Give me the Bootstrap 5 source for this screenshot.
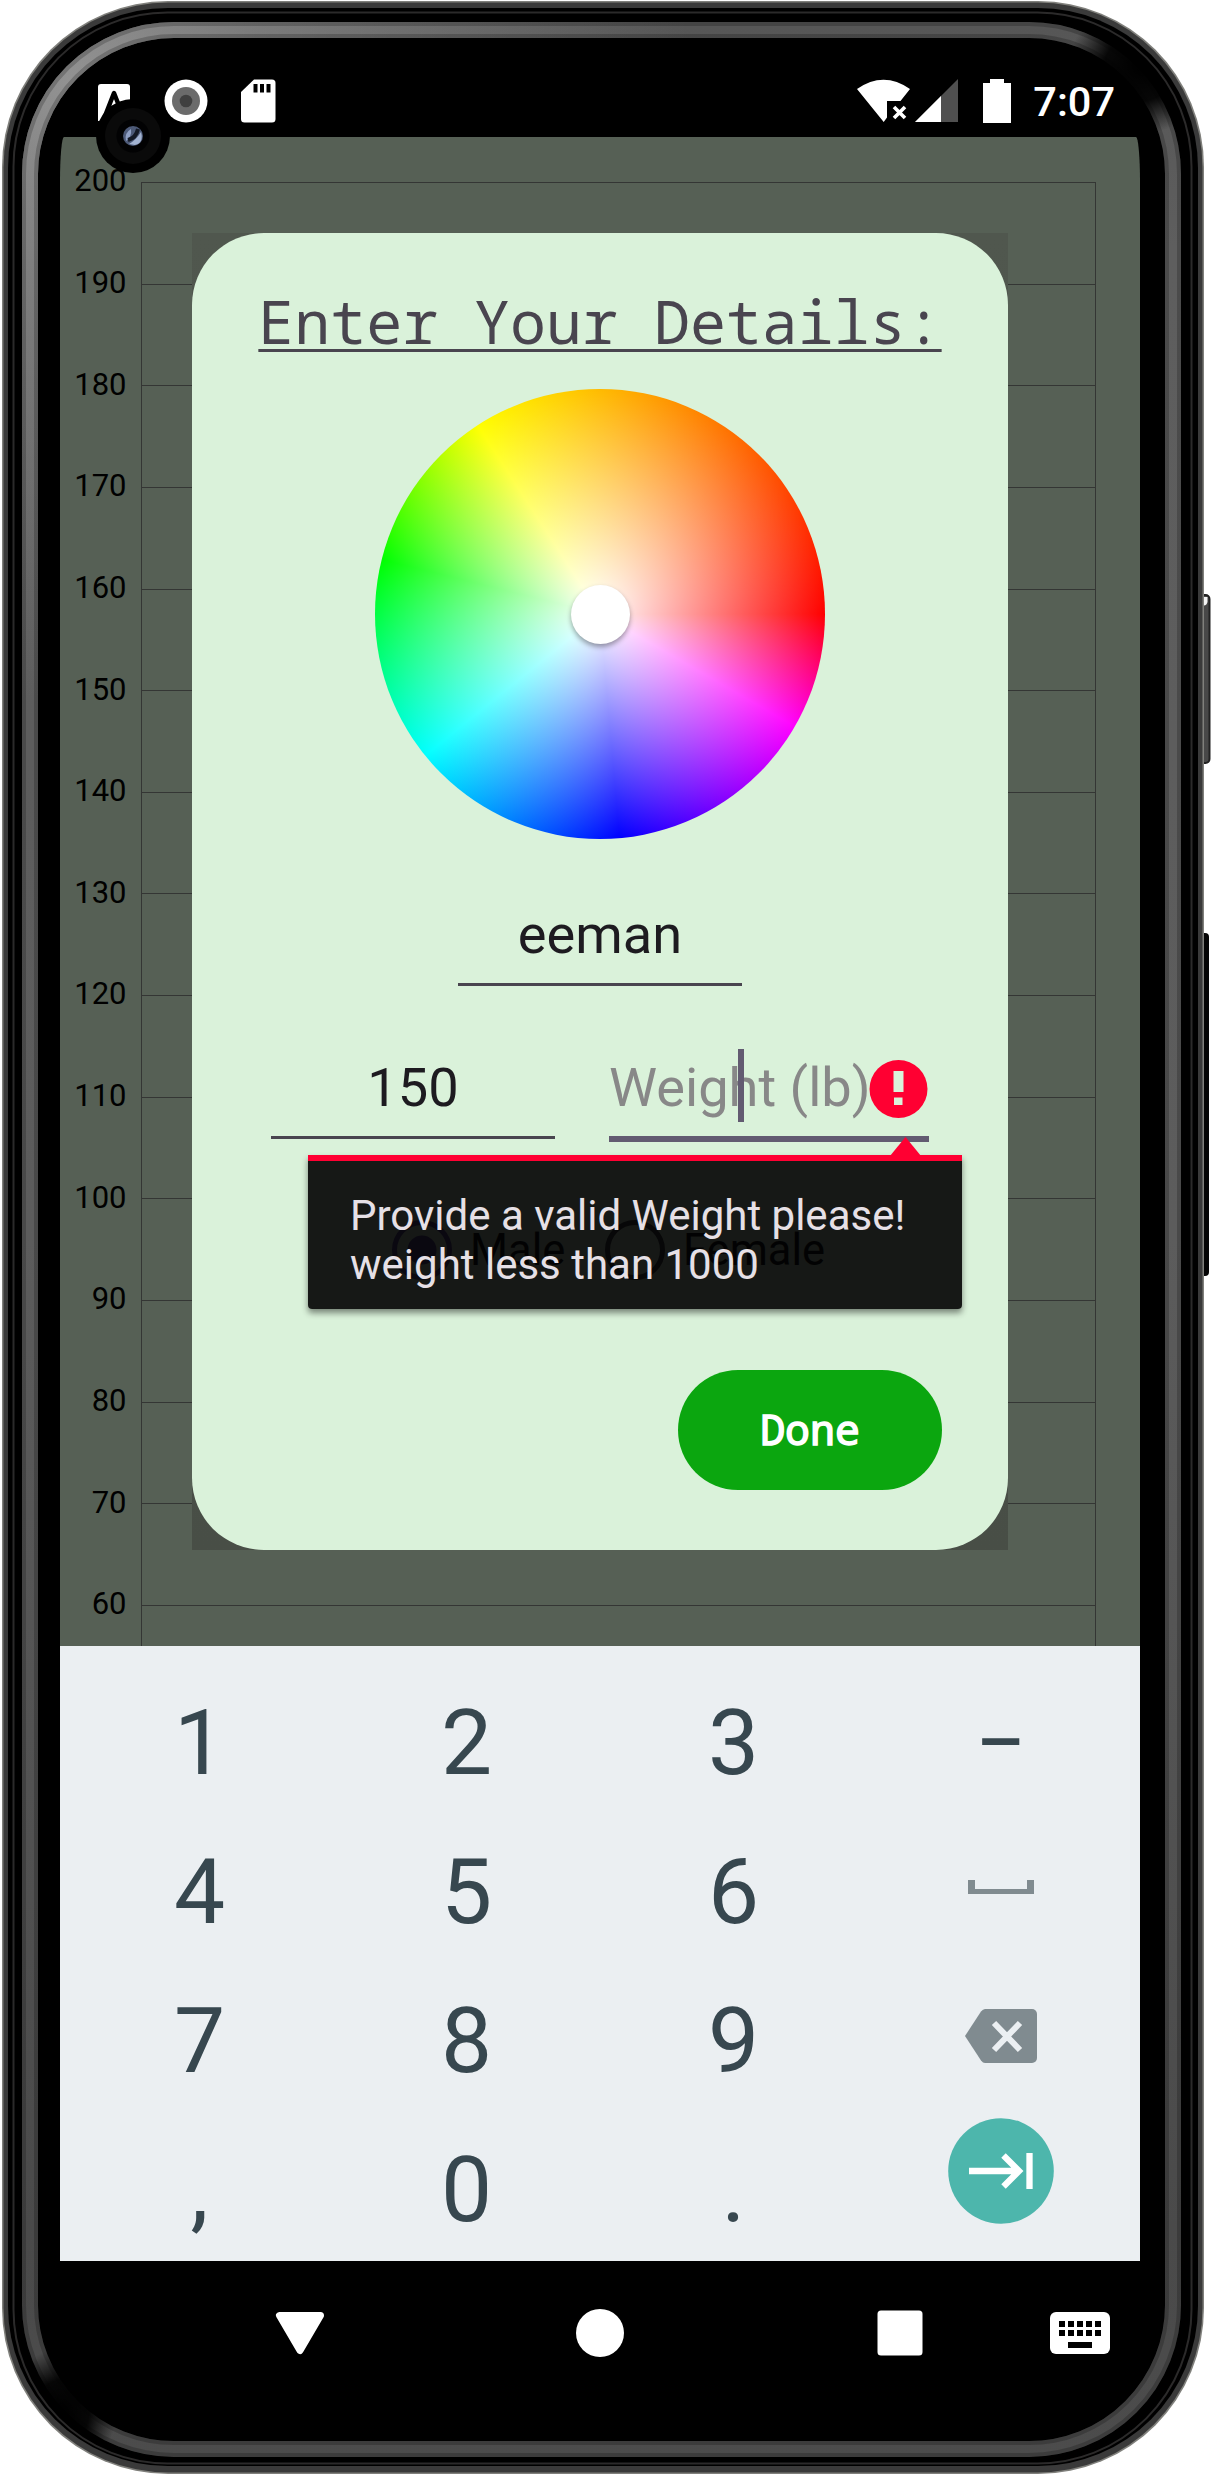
<!DOCTYPE html>
<html lang="en">
<head>
<meta charset="utf-8">
<meta name="viewport" content="width=device-width, initial-scale=1">
<title>Enter Your Details</title>
<link href="https://cdn.jsdelivr.net/npm/bootstrap@5.3.0/dist/css/bootstrap.min.css" rel="stylesheet">
<style>
  body { background:#fff; font-family:Roboto,"Liberation Sans",sans-serif; }
  svg { display:block; }
  .phone { width:1211px; height:2474px; padding:0 71px 0 60px; overflow:hidden; }
  .frame-art { left:0; top:0; }
  .statusbar { height:137px; }
  .status-left { padding:79px 0 0 37px; }
  .status-right { padding:79px 25px 0 0; }
  .clock { font-size:41.500px; font-weight:500; line-height:46px; color:#fff; margin-left:21px; }
  .camera { left:96px; top:99px; }
  .app-area { height:1509px; background:#566055; border-radius:4px 4px 0 0 / 44px 44px 0 0; overflow:hidden; }
  .chart { padding-top:45px; }
  .chart-row { height:101.64px; }
  .chart-label { width:66.5px; font-size:31px; line-height:40px; margin-top:-20.6px; color:#000; }
  .chart-cell { width:955px; margin-left:14.5px; border:1px solid #343634; border-bottom:0; }
  .dialog-box { left:132px; top:96px; width:816px; height:1317px; background:linear-gradient(#50574e,#484e46); }
  .dialog-card { border-radius:72px; background:#daf2da; }
  .dialog-title { font-family:"Noto Sans Mono","DejaVu Sans Mono",monospace; font-size:59.950px; line-height:60px; margin:58px 0 0; color:#49454f; text-decoration:underline; text-decoration-thickness:3px; text-underline-offset:5px; text-decoration-skip-ink:none; font-weight:400; white-space:nowrap; }
  .wheel { width:450px; height:450px; margin-top:38px; background:radial-gradient(closest-side,#fff,rgba(255,255,255,0)),conic-gradient(from 90deg,#f00 0deg,#f0f 30deg,#00f 85deg,#0ff 141deg,#0f0 194deg,#ff0 237deg,#f00 360deg); }
  .thumb { width:59px; height:59px; background:#fff; box-shadow:0 3px 5px rgba(0,0,0,.35); }
  .field { width:284px; padding-bottom:16px; border-bottom:3px solid #49454f; font-size:54.200px; line-height:64px; color:#1d1b20; text-align:center; }
  .field-name { margin-top:64px; }
  .field-row { margin-top:70px; padding-left:79px; gap:54px; }
  .field-active { width:320px; border-bottom:6px solid #625b71; color:#888; }
  .field-active .hint { width:260px; white-space:nowrap; }
  .caret { left:129px; top:-7px; width:6px; height:73px; background:#625b71; }
  .radio-row { margin-top:77px; padding-left:200px; height:62px; font-size:43.500px; line-height:64px; color:#1d1b20; }
  .radio-male { margin-left:18px; width:92px; white-space:nowrap; }
  .radio-dot-2 { margin-left:43px; }
  .radio-female { margin-left:18px; }
  .btn-done { width:264px; height:120px; margin:89px 66px 0 0; padding:0 0 3px; background:#0ba60f; color:#fff; border:0; border-radius:60px; font-family:"Noto Sans Mono","DejaVu Sans Mono",monospace; font-size:41.500px; line-height:60px; -webkit-text-stroke:1.5px #fff; }
  .err-pop { left:116px; top:922px; width:654px; height:154px; border-top:6px solid #ff0032; background:rgba(0,0,0,.9); background-clip:padding-box; border-radius:0 0 4px 4px; box-shadow:0 4px 6px rgba(0,0,0,.45); padding:30px 0 0 42px; color:#e6e0e6; font-size:42px; line-height:49px; white-space:nowrap; }
  .err-arrow { left:582px; top:-24px; }
  .keyboard { height:615px; background:#ebeff2; padding:23px 6px 0; }
  .key { height:149px; font-size:91px; line-height:148px; color:#37474f; text-align:center; }
  .navbar-keys { height:213px; }
</style>
</head>
<body>
<div class="phone position-relative">
  <svg class="frame-art position-absolute" width="1211" height="2474" viewBox="0 0 1211 2474">
    <defs>
      <linearGradient id="band" gradientUnits="userSpaceOnUse" x1="0" y1="0" x2="0" y2="2474">
        <stop offset="0" stop-color="#555"/><stop offset=".1" stop-color="#5e5e5e"/><stop offset=".5" stop-color="#5c5c5c"/><stop offset=".9" stop-color="#4a4a4a"/><stop offset="1" stop-color="#4c4c4c"/>
      </linearGradient>
      <radialGradient id="shine" gradientUnits="userSpaceOnUse" cx="70" cy="80" r="620">
        <stop offset="0" stop-color="#a0a0a0" stop-opacity=".8"/><stop offset=".3" stop-color="#a0a0a0" stop-opacity=".5"/><stop offset="1" stop-color="#a0a0a0" stop-opacity="0"/>
      </radialGradient>
      <radialGradient id="fade"><stop offset="0" stop-color="#000"/><stop offset=".5" stop-color="#000" stop-opacity=".92"/><stop offset="1" stop-color="#000" stop-opacity="0"/></radialGradient>
      <clipPath id="inner"><rect x="18" y="18" width="1167" height="2443" rx="150"/></clipPath>
    </defs>
    <rect x="1200" y="595" width="9.500" height="168" rx="4" fill="#484848" stroke="#222" stroke-width="2"/>
    <path d="M1203.500 587.500h4v6q-1 3-4 3z" transform="translate(0 -1)" fill="none"/>
    <path d="M1204 597h3.500v5q-1 3.500-3.500 3.500z" fill="#f4f4f4"/>
    <rect x="1198" y="933" width="11" height="343" rx="4" fill="#050505"/>
    <rect x="2" y="1" width="1202" height="2473" rx="166" fill="#80807c"/>
    <rect x="3.500" y="2.500" width="1199" height="2470" rx="165" fill="#3a3a3a"/>
    <rect x="8" y="8" width="1190" height="2458" rx="160" fill="#000"/>
    <rect x="13.500" y="12.500" width="1178" height="2451" rx="154" fill="none" stroke="#2b2a2a" stroke-width="2"/>
    <g clip-path="url(#inner)" fill="none">
      <rect x="30" y="30" width="1143" height="2419" rx="144" stroke="url(#band)" stroke-width="16"/>
      <rect x="30" y="30" width="1143" height="2419" rx="144" stroke="url(#shine)" stroke-width="16"/>
      <rect x="24" y="24" width="1155" height="2431" rx="150" stroke="#000" stroke-opacity=".2" stroke-width="4"/>
      <rect x="36" y="36" width="1131" height="2407" rx="138" stroke="#000" stroke-opacity=".2" stroke-width="4"/>
      <ellipse cx="1140" cy="68" rx="72" ry="66" fill="url(#fade)"/>
      <ellipse cx="62" cy="2412" rx="54" ry="64" fill="url(#fade)"/>
    </g>
  </svg>

  <div class="position-relative">
    <div class="statusbar d-flex justify-content-between align-items-start">
      <div class="status-left">
        <svg width="180" height="46" viewBox="97 79 180 46">
          <path d="M101 84h26a3 3 0 0 1 3 3v34H98V87a3 3 0 0 1 3-3z" fill="#fff"/>
          <path d="M105 116l9-23 9 23M108 108h12" stroke="#000" stroke-width="4.500" fill="none" stroke-linejoin="round"/>
          <circle cx="186" cy="101" r="21.500" fill="#fff"/><circle cx="186" cy="101" r="14" fill="#6b6b6b"/><circle cx="186" cy="101" r="6.300" fill="#404040"/>
          <path d="M254 79.500h18a3.500 3.500 0 0 1 3.500 3.500v36a3.500 3.500 0 0 1-3.500 3.500h-27.500a3.500 3.500 0 0 1-3.500-3.500V92z" fill="#fff"/>
          <path d="M253.500 84h4v8.500h-4zM260 84h4v8.500h-4zM266.500 84h4v8.500h-4z" fill="#000"/>
        </svg>
      </div>
      <div class="status-right d-flex">
        <svg width="156" height="46" viewBox="856 79 156 46">
          <path d="M857 89Q883.500 70.500 910 89L900.500 101H887V117.500L883.700 122z" fill="#fff"/>
          <path d="M894 107l11 11M905 107l-11 11" stroke="#fff" stroke-width="3.600"/>
          <path d="M958 79v43h-43z" fill="#505050"/><path d="M941 96v26h-26z" fill="#fff"/>
          <path d="M990 79h14v4h7v40h-28V83h7z" fill="#fff"/>
        </svg>
        <div class="clock">7:07</div>
      </div>
    </div>

    <div class="app-area position-relative">
      <div class="chart" id="chart"></div>

      <div class="dialog-box position-absolute">
        <div class="dialog-card w-100 h-100 d-flex flex-column align-items-center">
          <h1 class="dialog-title">Enter Your Details:</h1>
          <div class="wheel rounded-circle d-flex justify-content-center align-items-center flex-shrink-0"><div class="thumb rounded-circle"></div></div>
          <div class="field field-name">eeman</div>
          <div class="field-row d-flex align-items-start w-100">
            <div class="field">150</div>
            <div class="field field-active d-flex align-items-center position-relative">
              <div class="hint">Weight (lb)</div>
              <svg width="59" height="59" viewBox="0 0 59 59"><circle cx="29.500" cy="30" r="29" fill="#ff0032"/><path d="M24.500 12h10v21h-10zM25 38.500h8.500v7.500H25z" fill="#daf2da"/></svg>
              <div class="caret position-absolute"></div>
            </div>
          </div>
          <div class="radio-row d-flex w-100">
            <svg width="60" height="62" viewBox="0 0 60 62"><circle cx="30" cy="31" r="27.500" fill="none" stroke="#6750a4" stroke-width="5"/><circle cx="30" cy="31" r="14.500" fill="#6750a4"/></svg>
            <span class="radio-male">Male</span>
            <svg class="radio-dot-2" width="60" height="62" viewBox="0 0 60 62"><circle cx="30" cy="31" r="27.500" fill="none" stroke="#49454f" stroke-width="5"/></svg>
            <span class="radio-female">Female</span>
          </div>
          <button class="btn btn-done align-self-end" type="button">Done</button>
        </div>
        <div class="err-pop position-absolute">
          <svg class="err-arrow position-absolute" width="31" height="19" viewBox="0 0 31 19"><path d="M15.500 0L31 19H0z" fill="#ff0032"/></svg>
          Provide a valid Weight please!<br>weight less than 1000
        </div>
      </div>
    </div>

    <div class="keyboard">
      <div class="row g-0 row-cols-4">
        <div class="col key">1</div><div class="col key">2</div><div class="col key">3</div><div class="col key">−</div>
        <div class="col key">4</div><div class="col key">5</div><div class="col key">6</div>
        <div class="col key d-flex justify-content-center">
          <svg width="66" height="149" viewBox="0 0 66 149"><path d="M0 62h7v9h52v-9h7v14H0z" fill="#808b90"/></svg>
        </div>
        <div class="col key">7</div><div class="col key">8</div><div class="col key">9</div>
        <div class="col key d-flex justify-content-center">
          <svg width="72" height="149" viewBox="0 0 72 149"><path d="M20 42h47a5 5 0 0 1 5 5v44a5 5 0 0 1-5 5H20q-2 0-4-2.500L0 69l16-24.500Q18 42 20 42z" fill="#808b90"/><path d="M29 56l26 27M55 56l-26 27" stroke="#ebeff2" stroke-width="6"/></svg>
        </div>
        <div class="col key">,</div><div class="col key">0</div><div class="col key">.</div>
        <div class="col key d-flex justify-content-center">
          <svg width="106" height="149" viewBox="947 2116 106 149"><circle cx="1000" cy="2171" r="52.800" fill="#4db6ac"/><path d="M968 2171h51M1002.500 2155.500L1018 2171l-15.500 15.500M1028.500 2153v36" stroke="#fff" stroke-width="6.300" fill="none"/></svg>
        </div>
      </div>
    </div>

    <div class="navbar-keys">
      <svg width="1080" height="213" viewBox="60 2261 1080 213">
        <path d="M279.500 2315.500h41L300 2350.500z" fill="#fff" stroke="#fff" stroke-width="7" stroke-linejoin="round"/>
        <circle cx="600" cy="2333" r="24" fill="#fff"/>
        <rect x="877.500" y="2310.500" width="45" height="45" rx="3.500" fill="#fff"/>
        <rect x="1050" y="2312" width="60" height="42" rx="6" fill="#fff"/>
        <path d="M1059 2324h45M1059 2333h45" stroke="#000" stroke-width="6" stroke-dasharray="6 3"/><path d="M1068 2342h24v6h-24z" fill="#000"/>
      </svg>
    </div>
  </div>

  <svg class="camera position-absolute" width="74" height="74" viewBox="-37 -37 74 74">
    <circle r="37" fill="#000"/><circle r="28" fill="#0a0a0a"/><circle r="16.500" fill="#020203"/><circle r="10" fill="#4d5a78"/>
    <path d="M-7 5Q-9-3-2-7Q-1 1-7 5z" fill="#8fa0c4"/><path d="M-4 8Q3 4 8-4Q11 7 2 9z" fill="#a3b3d2"/><path d="M-5 4Q3 2 5-7" stroke="#151a26" stroke-width="4" fill="none"/>
  </svg>
</div>
<script>
  // y axis from 200 down to 60, one grid band per ten units
  const chart = document.getElementById('chart');
  for (let v = 200; v >= 60; v -= 10) {
    chart.insertAdjacentHTML('beforeend', `<div class="chart-row d-flex"><div class="chart-label text-end">${v}</div><div class="chart-cell"></div></div>`);
  }
</script>
<script src="https://cdn.jsdelivr.net/npm/bootstrap@5.3.0/dist/js/bootstrap.bundle.min.js"></script>
</body>
</html>
